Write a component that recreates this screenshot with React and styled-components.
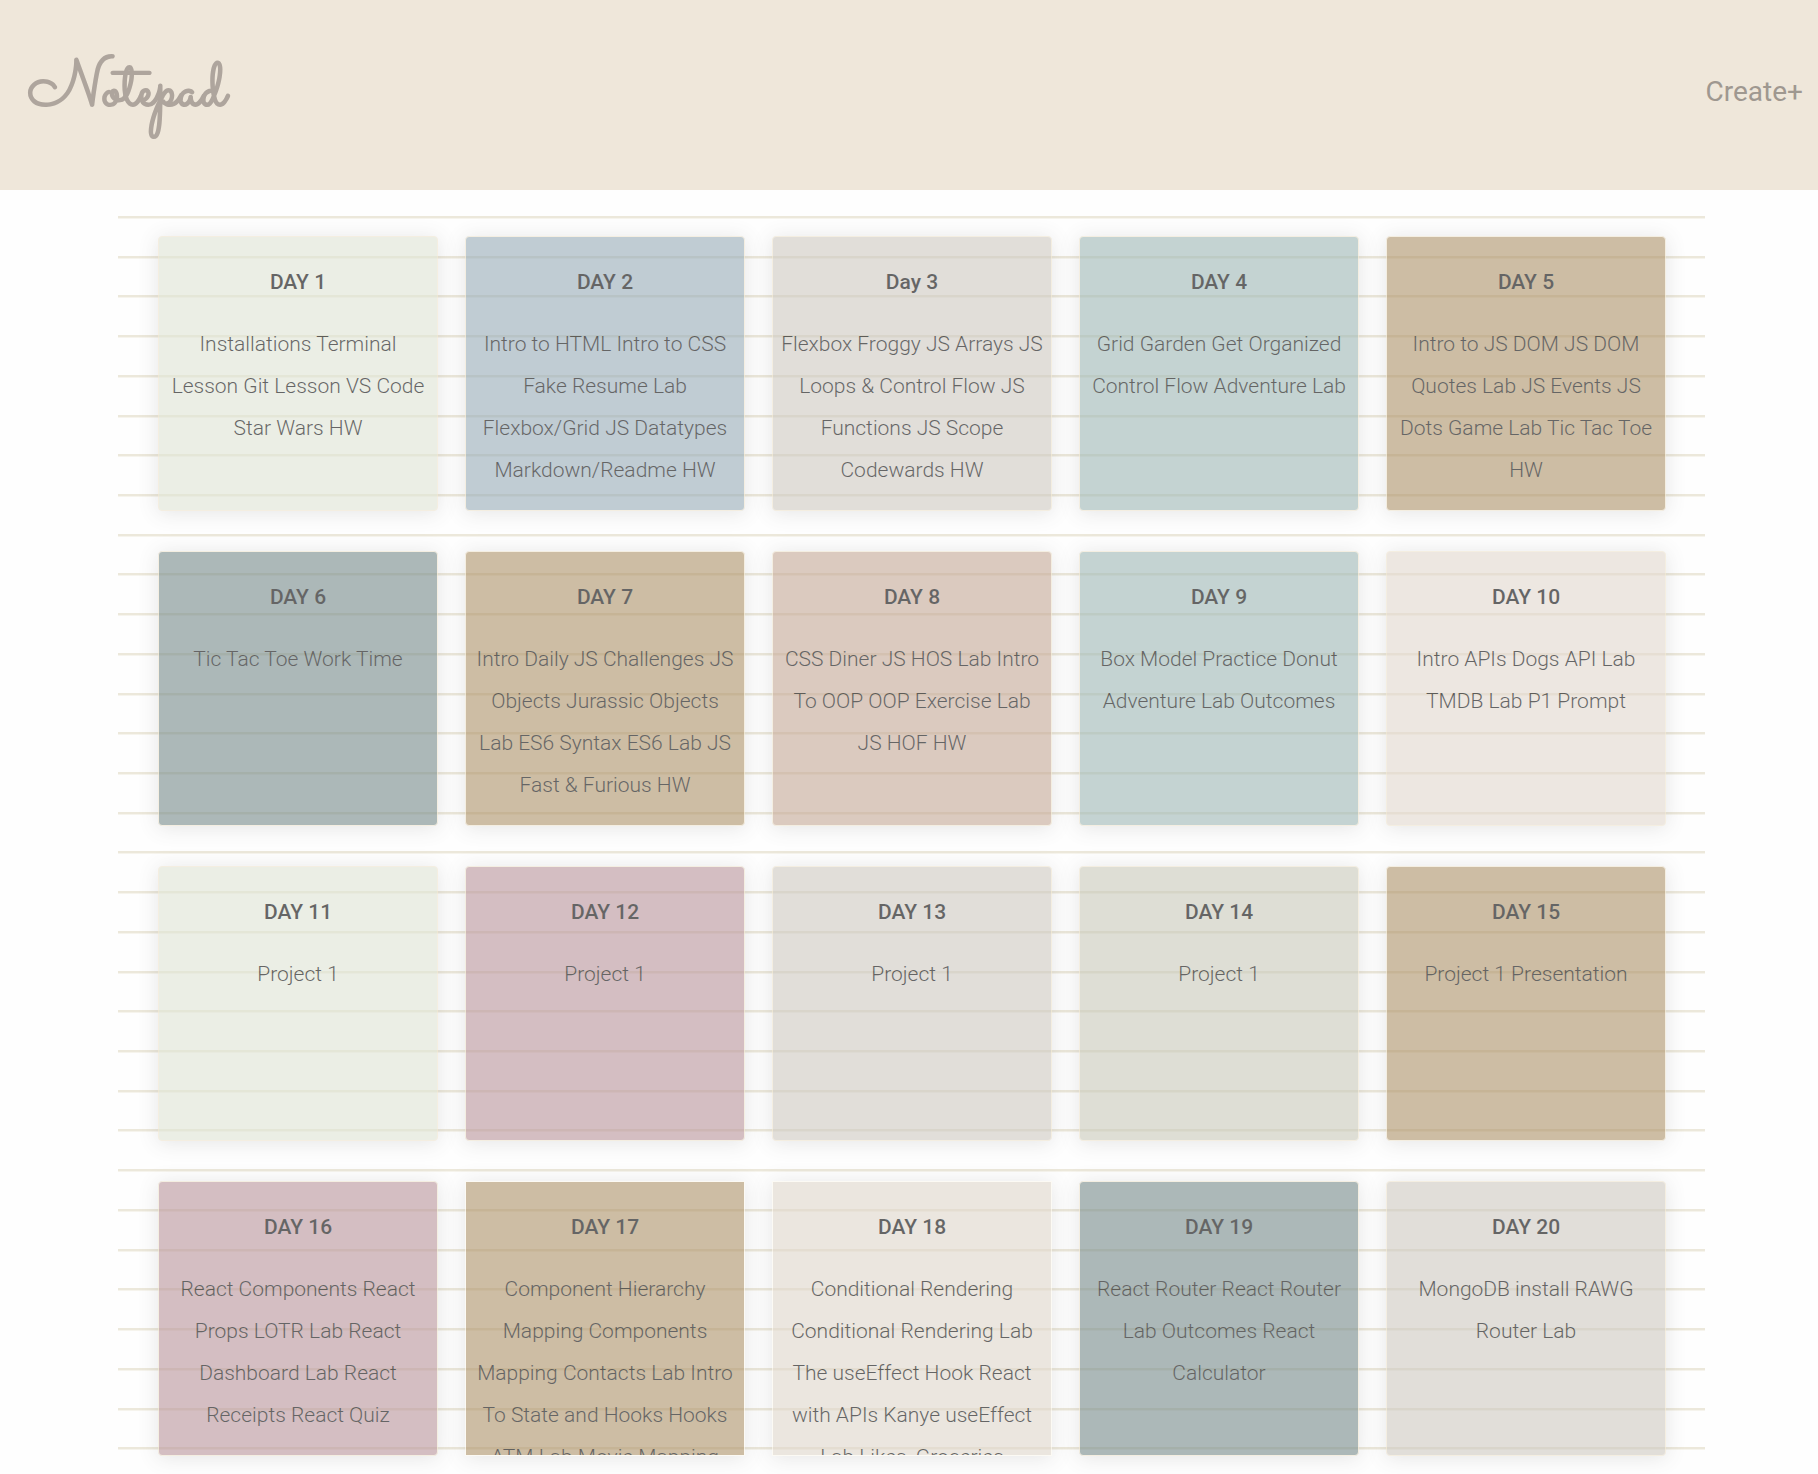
import React from "react";
import styled, { createGlobalStyle } from "styled-components";

const GlobalStyle = createGlobalStyle`
  *, *::before, *::after { box-sizing: border-box; }
  body {
    margin: 0;
    background: #fefefe;
    font-family: Roboto, "Liberation Sans", sans-serif;
  }
`;

const Page = styled.div`
  padding-bottom: 19px;
`;

const Header = styled.header`
  display: flex;
  align-items: center;
  justify-content: space-between;
  height: 190px;
  padding: 0 15px 6px 28px;
  background: #efe7da;
`;

const Logo = styled.a`
  color: #aea59d;
  font: 700 66px/76px Sacramento, "Dancing Script", cursive;
  text-decoration: none;
`;

const CreateLink = styled.a`
  color: #9f9890;
  font-size: 28px;
  line-height: 34px;
  text-decoration: none;
`;

const Sheet = styled.main`
  display: grid;
  grid-template-columns: repeat(5, minmax(0, 1fr));
  gap: 40px 27px;
  margin: 26px 113px 0 118px;
  padding: 20px 39px 0 40px;
  background: repeating-linear-gradient(
    to bottom,
    #ece8db 0 2px,
    #f6f4ed 2px 3px,
    transparent 3px 3.203%
  );
`;

const Note = styled.article`
  height: 275px;
  padding: 27px 8px 0;
  overflow: hidden;
  opacity: 0.6;
  color: #000;
  background: ${(p) => p.$color};
  border: 1px solid ${(p) => (p.$clipped ? "#fbf8ee" : "#efe5cf")};
  border-radius: ${(p) => (p.$clipped ? "0" : "4px")};
  box-shadow: 0 2px 20px rgba(0, 0, 0, 0.16);
  text-align: center;
`;

const Title = styled.h2`
  margin: 0 0 23px;
  font-size: 21px;
  font-weight: 500;
  line-height: 36px;
`;

const Body = styled.p`
  margin: 0;
  font-size: 21px;
  font-weight: 300;
  line-height: 42px;
`;

const COLORS = {
  sage: "#e0e5d6",
  blue: "#97abb8",
  stone: "#cec9c2",
  teal: "#9fb8b5",
  tan: "#ad9269",
  slate: "#768b8b",
  blush: "#c5a896",
  cream: "#e3d8cf",
  rose: "#b9959b",
  moss: "#c9cabb",
  ivory: "#dfd7cb",
};

const NOTES = [
  ["DAY 1", "sage", "Installations Terminal Lesson Git Lesson VS Code Star Wars HW"],
  ["DAY 2", "blue", "Intro to HTML Intro to CSS Fake Resume Lab Flexbox/Grid JS Datatypes Markdown/Readme HW"],
  ["Day 3", "stone", "Flexbox Froggy JS Arrays JS Loops & Control Flow JS Functions JS Scope Codewards HW"],
  ["DAY 4", "teal", "Grid Garden Get Organized Control Flow Adventure Lab"],
  ["DAY 5", "tan", "Intro to JS DOM JS DOM Quotes Lab JS Events JS Dots Game Lab Tic Tac Toe HW"],
  ["DAY 6", "slate", "Tic Tac Toe Work Time"],
  ["DAY 7", "tan", "Intro Daily JS Challenges JS Objects Jurassic Objects Lab ES6 Syntax ES6 Lab JS Fast & Furious HW"],
  ["DAY 8", "blush", "CSS Diner JS HOS Lab Intro To OOP OOP Exercise Lab JS HOF HW"],
  ["DAY 9", "teal", "Box Model Practice Donut Adventure Lab Outcomes"],
  ["DAY 10", "cream", "Intro APIs Dogs API Lab TMDB Lab P1 Prompt"],
  ["DAY 11", "sage", "Project 1"],
  ["DAY 12", "rose", "Project 1"],
  ["DAY 13", "stone", "Project 1"],
  ["DAY 14", "moss", "Project 1"],
  ["DAY 15", "tan", "Project 1 Presentation"],
  ["DAY 16", "rose", "React Components React Props LOTR Lab React Dashboard Lab React Receipts React Quiz"],
  ["DAY 17", "tan", "Component Hierarchy Mapping Components Mapping Contacts Lab Intro To State and Hooks Hooks ATM Lab Movie Mapping", true],
  ["DAY 18", "ivory", "Conditional Rendering Conditional Rendering Lab The useEffect Hook React with APIs Kanye useEffect Lab Likes, Groceries", true],
  ["DAY 19", "slate", "React Router React Router Lab Outcomes React Calculator"],
  ["DAY 20", "stone", "MongoDB install RAWG Router Lab"],
];

export default function App() {
  return (
    <>
      <GlobalStyle />
      <Page>
        <Header>
          <Logo href="#home">Notepad</Logo>
          <CreateLink href="#create">Create+</CreateLink>
        </Header>
        <Sheet>
          {NOTES.map(([title, color, text, clipped]) => (
            <Note key={title} $color={COLORS[color]} $clipped={clipped}>
              <Title>{title}</Title>
              <Body>{text}</Body>
            </Note>
          ))}
        </Sheet>
      </Page>
    </>
  );
}
